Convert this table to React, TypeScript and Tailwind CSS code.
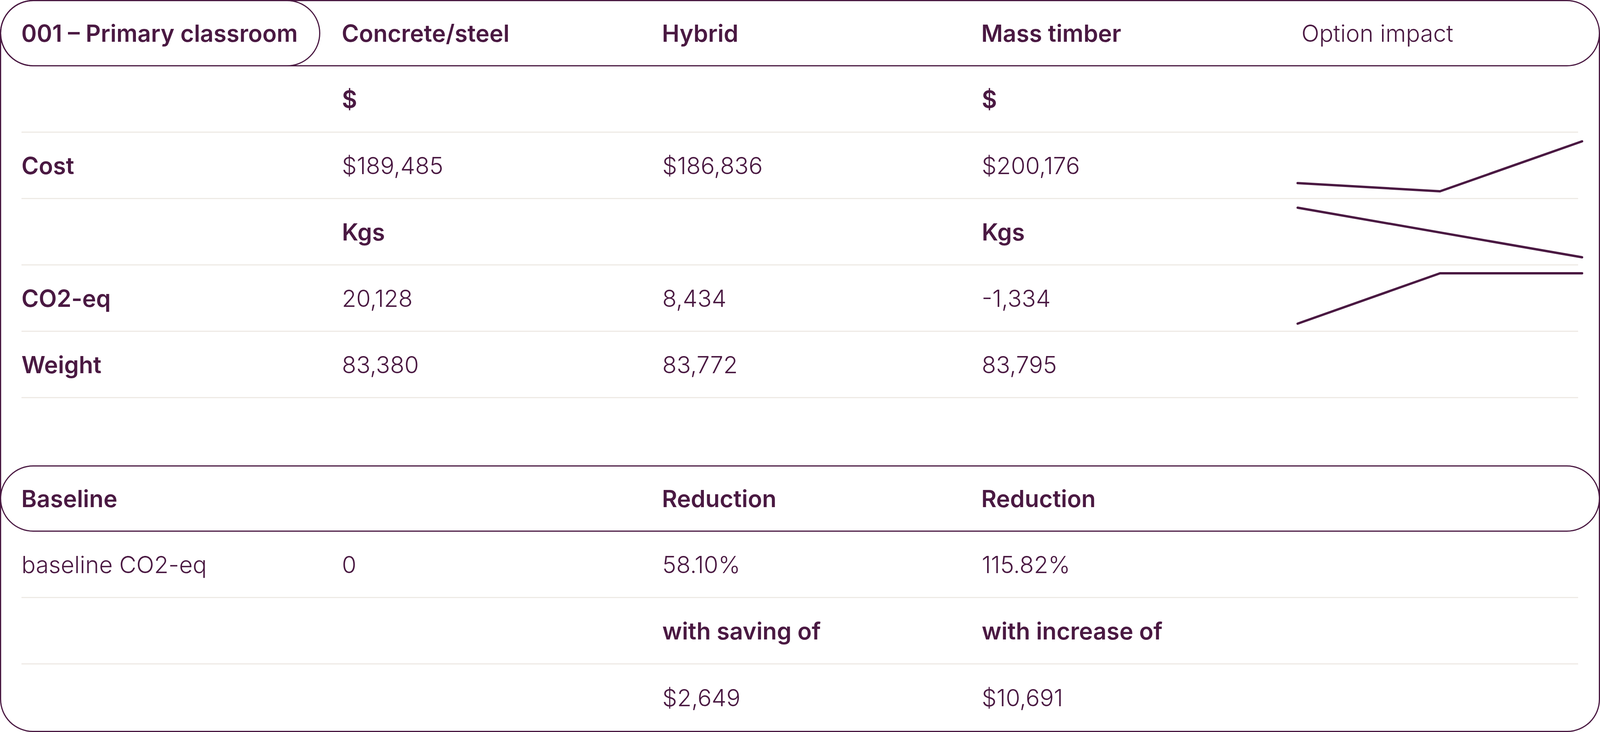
import React from "react";

const C = "text-[#4a1942]";

type Cell = { t: string; b?: boolean };

const rowGrid = "grid grid-cols-[20.583%_20.583%_20.516%_20.583%_1fr]";
const pillGrid = "grid grid-cols-[19.98%_20.05%_19.98%_20.05%_1fr]";

function Row({ cells, last }: { cells: Cell[]; last?: boolean }) {
  return (
    <div
      className={`${rowGrid} h-[170px] items-center ${last ? "" : "border-b-[3px] border-[#eeeae5]"}`}
    >
      {cells.map((c, i) => (
        <div
          key={i}
          className={`${c.b ? "font-semibold" : "font-light"} whitespace-nowrap`}
        >
          {c.t}
        </div>
      ))}
    </div>
  );
}

const b = (t: string): Cell => ({ t, b: true });
const l = (t: string): Cell => ({ t });
const e: Cell = { t: "" };

export default function App() {
  return (
    <div
      className={`w-full h-[1875px] bg-white ${C} text-[60px] leading-none overflow-hidden`}
      style={{ fontFamily: "Inter, 'Noto Sans', sans-serif" }}
    >
      {/* Header pill */}
      <div className={`relative z-10 ${pillGrid} h-[170px] items-stretch rounded-full border-[3px] border-[#4a1942] bg-white`}>
        <div className="-ml-[3px] -my-[3px] flex items-center rounded-full border-[3px] border-[#4a1942] pl-[6.3%] font-semibold whitespace-nowrap">
          001 – Primary classroom
        </div>
        <div className="flex items-center pl-[6.65%] font-semibold whitespace-nowrap">Concrete/steel</div>
        <div className="flex items-center pl-[6.65%] font-semibold whitespace-nowrap">Hybrid</div>
        <div className="flex items-center pl-[6.65%] font-semibold whitespace-nowrap">Mass timber</div>
        <div className="flex items-center pl-[6.65%] font-light whitespace-nowrap">Option impact</div>
      </div>

      {/* Body frame */}
      <div className="-mt-[84px] pt-[84px] border-x-[3px] border-b-[3px] rounded-b-[84px] border-[#4a1942]">
        <div className="relative ml-[1.27%] mr-[1.29%]">
          <Row cells={[e, b("$"), e, b("$"), e]} />
          <Row cells={[b("Cost"), l("$189,485"), l("$186,836"), l("$200,176"), e]} />
          <Row cells={[e, b("Kgs"), e, b("Kgs"), e]} />
          <Row cells={[b("CO2-eq"), l("20,128"), l("8,434"), l("-1,334"), e]} />
          <Row cells={[b("Weight"), l("83,380"), l("83,772"), l("83,795"), e]} />
          <svg
            className="absolute left-[81.75%] top-[182px] w-[18.72%] h-[487px] pointer-events-none overflow-visible"
            viewBox="0 0 835 487"
            preserveAspectRatio="none"
            fill="none"
          >
            <g stroke="#4a1942" strokeWidth="6" strokeLinecap="round" strokeLinejoin="round">
              <polyline vectorEffect="non-scaling-stroke" points="10,117 418,138 825,10" />
              <polyline vectorEffect="non-scaling-stroke" points="10,180 825,307" />
              <polyline vectorEffect="non-scaling-stroke" points="10,477 418,348 825,348" />
            </g>
          </svg>
        </div>

        <div className="h-[172px]" />

        {/* Second pill */}
        <div className={`-mx-[3px] ${pillGrid} h-[170px] items-center rounded-full border-[3px] border-[#4a1942] bg-white`}>
          <div className="pl-[6.3%] font-semibold">Baseline</div>
          <div />
          <div className="pl-[6.65%] font-semibold">Reduction</div>
          <div className="pl-[6.65%] font-semibold">Reduction</div>
          <div />
        </div>

        <div className="ml-[1.27%] mr-[1.29%]">
          <Row cells={[l("baseline CO2-eq"), l("0"), l("58.10%"), l("115.82%"), e]} />
          <Row cells={[e, e, b("with saving of"), b("with increase of"), e]} />
          <Row cells={[e, e, l("$2,649"), l("$10,691"), e]} last />
        </div>
      </div>
    </div>
  );
}
